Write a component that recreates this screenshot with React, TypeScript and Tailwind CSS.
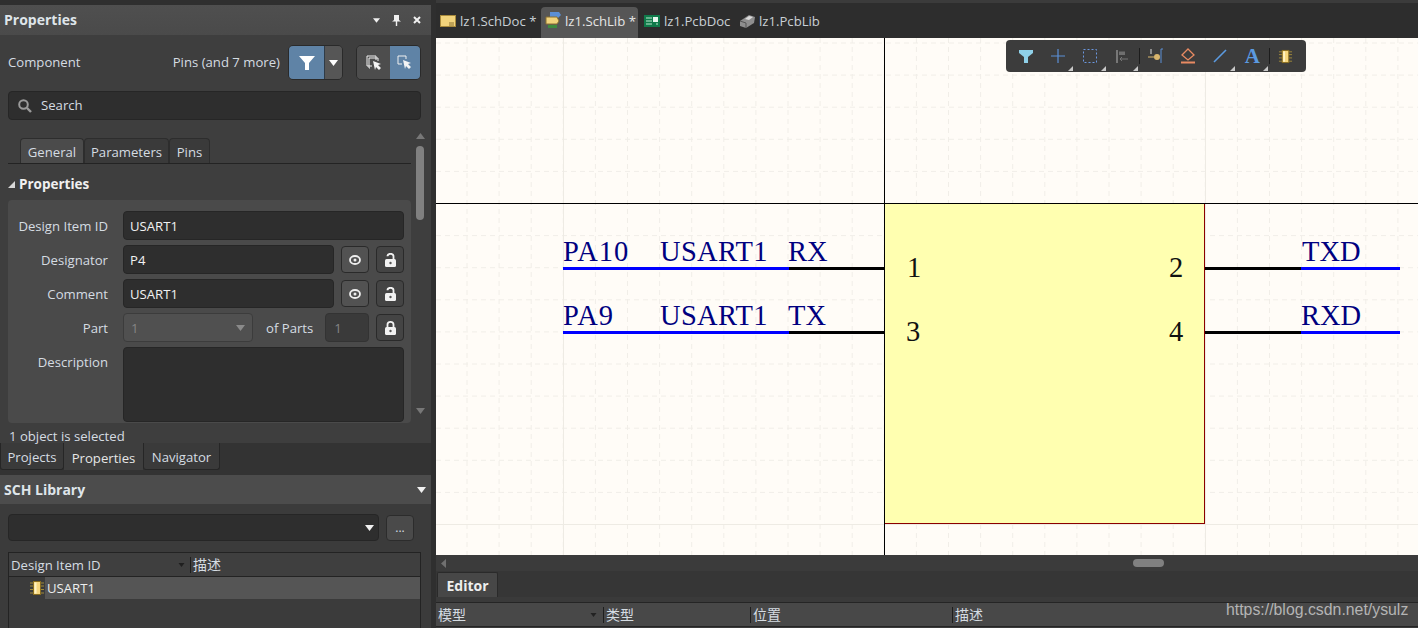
const minorX = Array.from({ length: 31 }, (_, i) => 31 + i * 32.1);
const minorY = Array.from({ length: 17 }, (_, i) => 5 + i * 32.1);

function Caret({ className = "", w = 9, h = 6 }: { className?: string; w?: number; h?: number }) {
  return (
    <svg width={w} height={h} viewBox="0 0 9 6" className={className}>
      <path d="M0 0h9L4.500 6z" fill="currentColor" />
    </svg>
  );
}

function Chip({ size = 16 }: { size?: number }) {
  return (
    <svg width={size} height={size} viewBox="0 0 16 16">
      <path d="M1 3h14M1 6h14M1 9.500h14M1 13h14" stroke="#a08a3c" strokeWidth="1" />
      <rect x="4.500" y="1.500" width="7" height="13" fill="#f7d77e" stroke="#8a6d1e" />
      <rect x="5.500" y="2.500" width="2" height="11" fill="#fff3c4" />
    </svg>
  );
}

function EyeIcon() {
  return (
    <svg width="12" height="10" viewBox="0 0 12 10">
      <ellipse cx="6" cy="5" rx="5" ry="4" fill="none" stroke="#eeeeee" strokeWidth="1.800" />
      <circle cx="6" cy="5" r="1.500" fill="#eeeeee" />
    </svg>
  );
}

function LockIcon({ open }: { open?: boolean }) {
  return (
    <svg width="11" height="14" viewBox="0 0 11 14">
      <path d={open ? "M2.500 3.200a3 2.400 0 0 1 6 0V7" : "M2.500 7V3.500a3 2.600 0 0 1 6 0V7"} fill="none" stroke="#f2f2f2" strokeWidth="1.800" />
      <rect x="0" y="6" width="11" height="8" rx="1.500" fill="#f2f2f2" />
      <circle cx="5.500" cy="10" r="1.200" fill="#555555" />
    </svg>
  );
}

function SmallButton({ children, light }: { children: React.ReactNode; light?: boolean }) {
  return (
    <button className={`flex h-[27px] w-[28px] items-center justify-center rounded-[4px] border border-[#2a2a2a] ${light ? "bg-[#525252]" : "bg-[#444444]"}`}>
      {children}
    </button>
  );
}

function Label({ children }: { children: React.ReactNode }) {
  return <div className="w-[100px] shrink-0 whitespace-nowrap text-right text-[#d5dce2]">{children}</div>;
}

function Field({ value }: { value: string }) {
  return (
    <div className="flex h-[29px] flex-1 items-center rounded-[4px] border border-[#262626] bg-[#2e2e2e] px-[6px] text-[#f2f2f2]">
      {value}
    </div>
  );
}

function FieldRow({ label, value, lockOpen, light }: { label: string; value: string; lockOpen?: boolean; light?: boolean }) {
  return (
    <div className="flex h-[29px] items-center">
      <Label>{label}</Label>
      <div className="ml-[15px] flex flex-1 items-center gap-[7px]">
        <Field value={value} />
        <SmallButton light={light}><EyeIcon /></SmallButton>
        <SmallButton><LockIcon open={lockOpen} /></SmallButton>
      </div>
    </div>
  );
}

function PropertiesPanel() {
  return (
    <div className="relative flex h-[438px] flex-col bg-[#3e3e3e]">
      <div className="flex h-[30px] shrink-0 items-center justify-between bg-gradient-to-b from-[#4f4f4f] to-[#4a4a4a] pl-[4px] pr-[10px]">
        <span className="text-[14px] font-bold text-[#dfe5ea]">Properties</span>
        <div className="flex items-center gap-[12px] text-[#f0f0f0]">
          <Caret w={7} h={5} />
          <svg width="9" height="11" viewBox="0 0 9 11"><path d="M2 0h5v5l2 1.500H5.200V11H3.800V6.500H0L2 5z" fill="currentColor" /></svg>
          <svg width="8" height="8" viewBox="0 0 8 8"><path d="M1 1l6 6M7 1L1 7" stroke="currentColor" strokeWidth="2" /></svg>
        </div>
      </div>

      <div className="mt-[10px] flex h-[35px] items-center pl-[8px] pr-[10px]">
        <span className="pb-[2px] text-[#d5dce2]">Component</span>
        <span className="ml-auto mr-[8px] pb-[2px] text-[#d5dce2]">Pins (and 7 more)</span>
        <div className="flex h-[35px] overflow-hidden rounded-[5px] border border-[#2a2a2a]">
          <div className="flex w-[35px] items-center justify-center bg-[#5f83a6]">
            <svg width="16" height="16" viewBox="0 0 16 16"><path d="M0 1h16L10 8v7H6V8z" fill="#fff" /></svg>
          </div>
          <div className="flex w-[18px] items-center justify-center border-l border-[#2f3b47] bg-[#565656] text-white"><Caret /></div>
        </div>
        <div className="ml-[13px] flex h-[35px] overflow-hidden rounded-[5px] border border-[#2a2a2a]">
          <div className="flex w-[33px] items-center justify-center bg-[#4d4d4d]">
            <svg width="16" height="16" viewBox="0 0 16 16">
              <path d="M6 11H1V1h9v4M4 13H3V3h9v3" fill="none" stroke="#f0f0f0" />
              <path d="M7 6l8 3-3 1 3 3-2 2-3-3-1 3z" fill="#f4f4f4" />
            </svg>
          </div>
          <div className="flex w-[30px] items-center justify-center bg-[#5f83a6]">
            <svg width="16" height="16" viewBox="0 0 16 16">
              <path d="M5 9H1V1h8v3" fill="none" stroke="#f0f0f0" />
              <path d="M6 5l8 3-3 1 3 3-2 2-3-3-1 3z" fill="#f4f4f4" />
            </svg>
          </div>
        </div>
      </div>

      <div className="mx-[8px] mr-[10px] mt-[11px] flex h-[29px] items-center gap-[9px] rounded-[4px] border border-[#262626] bg-[#2e2e2e] pl-[9px]">
        <svg width="14" height="14" viewBox="0 0 14 14">
          <circle cx="5.500" cy="5.500" r="4.300" fill="none" stroke="#9a9a9a" strokeWidth="2" />
          <path d="M9 9l4 4" stroke="#9a9a9a" strokeWidth="2.400" />
        </svg>
        <span className="pb-[2px] text-[#d5dce2]">Search</span>
      </div>

      <div className="relative flex-1 overflow-hidden pr-[20px]">
        <div className="ml-[8px] mt-[18px] flex h-[26px] border-b border-[#232323] pl-[12px]">
          <div className="flex w-[64px] items-center justify-center rounded-t-[4px] border border-b-0 border-[#2d2d2d] bg-[#4b4b4b] pt-[2px] text-[#d5dce2]">General</div>
          <div className="flex w-[85px] items-center justify-center rounded-t-[4px] border border-b-0 border-[#2d2d2d] bg-[#3a3a3a] pt-[2px] text-[#d5dce2]">Parameters</div>
          <div className="flex w-[41px] items-center justify-center rounded-t-[4px] border border-b-0 border-[#2d2d2d] bg-[#3a3a3a] pt-[2px] text-[#d5dce2]">Pins</div>
        </div>
        <div className="ml-[8px] mt-[11px] flex h-[18px] items-center gap-[4px]">
          <svg width="7" height="7" viewBox="0 0 7 7"><path d="M7 0v7H0z" fill="#d8d8d8" /></svg>
          <span className="text-[13.500px] font-bold text-[#f0f0f0]">Properties</span>
        </div>
        <div className="ml-[8px] mt-[7px] flex h-[223px] flex-col gap-[5px] overflow-hidden rounded-[4px] bg-[#4a4a4a] pr-[7px] pt-[11px]">
          <div className="flex h-[29px] items-center">
            <Label>Design Item ID</Label>
            <div className="ml-[15px] flex flex-1"><Field value="USART1" /></div>
          </div>
          <FieldRow label="Designator" value="P4" lockOpen light />
          <FieldRow label="Comment" value="USART1" lockOpen light />
          <div className="flex h-[29px] items-center">
            <Label>Part</Label>
            <div className="ml-[15px] flex h-[29px] w-[130px] shrink-0 items-center justify-between rounded-[4px] border border-[#3c3c3c] bg-[#505050] px-[7px] text-[#858585]">
              1<Caret className="text-[#8a8a8a]" />
            </div>
            <span className="ml-[13px] whitespace-nowrap text-[#d5dce2]">of Parts</span>
            <div className="ml-[12px] flex h-[29px] w-[44px] shrink-0 items-center rounded-[4px] border border-[#333333] bg-[#3a3a3a] px-[8px] text-[#858585]">1</div>
            <div className="ml-[7px]"><SmallButton><LockIcon /></SmallButton></div>
          </div>
          <div className="flex items-start">
            <div className="pt-[6px]"><Label>Description</Label></div>
            <div className="ml-[15px] h-[75px] flex-1 rounded-[4px] border border-[#262626] bg-[#2e2e2e]" />
          </div>
        </div>

        {/* scrollbar */}
        <div className="absolute right-[7px] top-[13px] flex h-[281px] w-[8px] flex-col items-center justify-between text-[#777777]">
          <Caret className="rotate-180" />
          <div className="absolute top-[13px] h-[74px] w-[8px] rounded-[4px] bg-[#808080]" />
          <Caret />
        </div>
      </div>
      <div className="absolute bottom-[-1px] left-[9px] h-[15px] leading-[15px] text-[#d5dce2]">1 object is selected</div>
    </div>
  );
}

function LibraryPanel() {
  return (
    <div className="flex flex-1 flex-col bg-[#3b3b3b]">
      <div className="flex h-[29px] shrink-0 items-center justify-between bg-[#4c4c4c] pl-[4px] pr-[5px]">
        <span className="text-[14px] font-bold text-[#dfe5ea]">SCH Library</span>
        <Caret className="text-[#f0f0f0]" />
      </div>
      <div className="mt-[10px] flex items-center pl-[8px]">
        <div className="flex h-[27px] w-[371px] items-center justify-end rounded-[4px] border border-[#262626] bg-[#2e2e2e] pr-[4px] text-[#f0f0f0]"><Caret /></div>
        <div className="ml-[7px] flex h-[26px] w-[28px] items-center justify-center rounded-[4px] border border-[#2c2c2c] bg-[#4a4a4a] text-[12px] leading-none text-[#d5dce2]">...</div>
      </div>
      <div className="ml-[8px] mt-[11px] flex w-[413px] flex-1 flex-col border-x border-t border-[#232323]">
        <div className="flex h-[24px] items-center border-b border-[#232323] bg-[#3f3f3f] text-[#d5dce2]">
          <span className="ml-[2px] w-[167px]">Design Item ID</span>
          <Caret w={7} h={4} className="text-[#1f1f1f]" />
          <div className="ml-[5px] h-[16px] w-px bg-[#1e1e1e]" />
          <span className="ml-[2px] text-[14px]">描述</span>
        </div>
        <div className="flex h-[22px] items-center">
          <div className="ml-[20px]"><Chip size={16} /></div>
          <div className="flex h-[22px] flex-1 items-center bg-[#555555] pl-[2px] text-[#eeeeee]">USART1</div>
        </div>
      </div>
    </div>
  );
}

function ToolCorner() {
  return <span className="absolute bottom-[1px] right-[1px] h-0 w-0 border-b-[5px] border-l-[5px] border-b-[#c8c8c8] border-l-transparent" />;
}

function Tool({ children, corner }: { children: React.ReactNode; corner?: boolean }) {
  return (
    <div className="relative flex h-[32px] w-[32.200px] items-center justify-center">
      {children}
      {corner && <ToolCorner />}
    </div>
  );
}

function FloatingToolbar() {
  return (
    <div className="absolute left-[570px] top-[2px] flex h-[32px] w-[300px] items-center rounded-[4px] bg-[#3c3c3c] pl-[4px]">
      <Tool>
        <svg width="14" height="13" viewBox="0 0 14 13"><path d="M0 0h14v3L9 7v6H5V7L0 3z" fill="#8fd0e8" /></svg>
      </Tool>
      <Tool corner>
        <svg width="14" height="14" viewBox="0 0 14 14"><path d="M7 0v14M0 7h14" stroke="#5b8fd6" strokeWidth="1.200" /></svg>
      </Tool>
      <Tool corner>
        <svg width="14" height="14" viewBox="0 0 14 14"><rect x="0.500" y="0.500" width="13" height="13" fill="none" stroke="#6b97df" strokeDasharray="2 2" /></svg>
      </Tool>
      <Tool corner>
        <svg width="13" height="13" viewBox="0 0 13 13"><path d="M1 0v13" stroke="#777777" strokeWidth="2" /><path d="M3 1.500h6v3.500H3z" fill="#6f6f6f" /><path d="M12 9H4M6 7L4 9l2 2" fill="none" stroke="#777777" /></svg>
      </Tool>
      <div className="h-[16px] w-px bg-[#1c1c1c]" />
      <Tool>
        <svg width="16" height="16" viewBox="0 0 16 16"><path d="M0 9h6" stroke="#d8b56c" /><circle cx="9" cy="9" r="3" fill="#d8b56c" /><path d="M15 1h-2v14" fill="none" stroke="#5b8fd6" /><path d="M3 1v5" stroke="#dddddd" /></svg>
      </Tool>
      <Tool>
        <svg width="14" height="16" viewBox="0 0 14 16"><path d="M7 1l6 6-6 5-6-5z" fill="none" stroke="#e88a62" strokeWidth="1.300" /><path d="M0 14.500h14" stroke="#e88a62" strokeWidth="2" /></svg>
      </Tool>
      <Tool corner>
        <svg width="14" height="14" viewBox="0 0 14 14"><path d="M1 13L13 1" stroke="#5b9ae0" strokeWidth="1.600" /></svg>
      </Tool>
      <Tool corner>
        <span className="text-[21px] font-bold leading-none text-[#5b9ae0] [font-family:'Liberation_Serif',serif]">A</span>
      </Tool>
      <div className="h-[16px] w-px bg-[#1c1c1c]" />
      <Tool><Chip size={15} /></Tool>
    </div>
  );
}

function PinLabel({ x, y, wide, children }: { x: number; y: number; wide?: string; children: React.ReactNode }) {
  return (
    <span className={`absolute whitespace-pre text-[28.500px] leading-[32px] text-[#000080] ${wide ?? ""}`} style={{ left: x, top: y }}>
      {children}
    </span>
  );
}

function PinNumber({ x, y, children }: { x: number; y: number; children: React.ReactNode }) {
  return (
    <span className="absolute text-[28.500px] leading-[32px] text-[#111111]" style={{ left: x, top: y }}>
      {children}
    </span>
  );
}

function SchematicCanvas() {
  return (
    <div className="relative flex-1 overflow-hidden bg-[#fffcf7] [font-family:'Liberation_Serif',serif]">
      {/* grid, crosshair and pins are the drawing itself */}
      <svg className="absolute inset-0" width="982" height="517">
        {minorX.map((x) => (
          <line key={x} x1={x} x2={x} y1="0" y2="517" stroke="#f1eee8" strokeDasharray="5 4" />
        ))}
        {minorY.map((y) => (
          <line key={y} x1="0" x2="982" y1={y} y2={y} stroke="#f1eee8" strokeDasharray="5 4" />
        ))}
        <path d="M127.500 0v517M769.500 0v517M0 486.500h982" stroke="#eeebe4" />
        <rect x="448.500" y="165.500" width="320" height="320" fill="#ffffb0" stroke="#8b0000" />
        <path d="M0 165.500h982M448.500 0v517" stroke="#000" />
        <path d="M127 230.500h226M127 294.500h226M865 230.500h99M865 294.500h99" stroke="#0000ff" strokeWidth="3" />
        <path d="M353 230.500h95M353 294.500h95M769 230.500h96M769 294.500h96" stroke="#000" strokeWidth="3" />
      </svg>
      <PinLabel x={127} y={198} wide="tracking-[1px]">PA10</PinLabel>
      <PinLabel x={224} y={198} wide="tracking-[0.300px]">USART1</PinLabel>
      <PinLabel x={352} y={198}>RX</PinLabel>
      <PinLabel x={127} y={262} wide="tracking-[1px]">PA9</PinLabel>
      <PinLabel x={224} y={262} wide="tracking-[0.300px]">USART1</PinLabel>
      <PinLabel x={352} y={262}>TX</PinLabel>
      <PinLabel x={866} y={198}>TXD</PinLabel>
      <PinLabel x={865} y={262}>RXD</PinLabel>
      <PinNumber x={471} y={214}>1</PinNumber>
      <PinNumber x={470} y={278}>3</PinNumber>
      <PinNumber x={733} y={214}>2</PinNumber>
      <PinNumber x={733} y={278}>4</PinNumber>
      <div className="[font-family:'Open_Sans',sans-serif]"><FloatingToolbar /></div>
    </div>
  );
}

function DocTab({ icon, label, active, width }: { icon: React.ReactNode; label: string; active?: boolean; width: string }) {
  return (
    <div className={`flex h-[31px] items-center gap-[4px] rounded-t-[4px] pb-[3px] ${width} ${active ? "bg-[#565656] text-[#e6e6e6]" : "text-[#c9d0d6]"}`}>
      {icon}
      <span className="whitespace-nowrap">{label}</span>
    </div>
  );
}

export default function App() {
  return (
    <div className="relative flex h-[628px] w-[1418px] overflow-hidden bg-[#2f2f2f] text-[13.150px] leading-[18px] [font-family:'Open_Sans','Noto_Sans_CJK_SC',sans-serif]">
      <div className="flex w-[431px] shrink-0 flex-col pt-[5px]">
        <PropertiesPanel />
        <div className="flex h-[28px] shrink-0 items-start bg-[#333333]">
          <div className="flex h-[27px] w-[64px] items-center justify-center rounded-b-[3px] border border-t-0 border-[#262626] bg-[#3a3a3a] pt-[2px] text-[#d5dce2]">Projects</div>
          <div className="flex h-[27px] w-[79px] items-center justify-center bg-[#3e3e3e] pt-[2px] text-[#e6e6e6]">Properties</div>
          <div className="flex h-[27px] w-[77px] items-center justify-center rounded-b-[3px] border border-t-0 border-[#262626] bg-[#3a3a3a] pt-[2px] text-[#d5dce2]">Navigator</div>
        </div>
        <div className="h-[4px] shrink-0 bg-[#333333]" />
        <LibraryPanel />
      </div>

      <div className="ml-[5px] flex flex-1 flex-col">
        <div className="flex h-[38px] shrink-0 items-end border-t-[3px] border-[#3b3b3b] bg-[#2d2d2d]">
          <DocTab
            width="w-[105px] pl-[4px]"
            label="lz1.SchDoc *"
            icon={
              <svg width="16" height="12" viewBox="0 0 16 12"><rect x="0.500" y="0.500" width="15" height="11" fill="#f1d37c" stroke="#a88a3c" /><path d="M9 8h5M9 10h5" stroke="#8a7030" /></svg>
            }
          />
          <DocTab
            active
            width="w-[97px] pl-[4px]"
            label="lz1.SchLib *"
            icon={
              <svg width="16" height="18" viewBox="0 0 16 18"><path d="M5 0h9l2 3-3 3H5z" fill="#5b8fd6" /><path d="M1 5h11l2 4-2 3H1z" fill="#f1d37c" stroke="#8a7030" /><path d="M3 13h9v3H3z" fill="#3f8a3f" /></svg>
            }
          />
          <DocTab
            width="w-[96px] pl-[6px]"
            label="lz1.PcbDoc"
            icon={
              <svg width="16" height="12" viewBox="0 0 16 12"><rect width="16" height="12" fill="#0f7a4a" /><path d="M2 3h6M2 6h6M2 9h6M12 9h2" stroke="#bfe8cf" /><rect x="9" y="2" width="5" height="5" fill="#e8f5ee" /></svg>
            }
          />
          <DocTab
            width="w-[90px] pl-[6px]"
            label="lz1.PcbLib"
            icon={
              <svg width="15" height="14" viewBox="0 0 15 14"><path d="M0 7l9-6 6 2-1 6-8 5-6-2z" fill="#8e8e8e" /><path d="M5 5l4-3 4 1-4 3z" fill="#dcdcdc" /><path d="M0 7l6 2v5" fill="none" stroke="#555555" /></svg>
            }
          />
        </div>

        <SchematicCanvas />

        <div className="flex h-[16px] shrink-0 items-center bg-[#3b3b3b] pl-[5px]">
          <svg width="5" height="9" viewBox="0 0 5 9"><path d="M5 0v9L0 4.500z" fill="#707070" /></svg>
          <div className="ml-[687px] h-[8px] w-[31px] rounded-[4px] bg-[#808080]" />
        </div>
        <div className="h-[26px] shrink-0 bg-[#363636] pl-px pt-[1px]">
          <div className="flex h-[25px] w-[61px] items-center justify-center rounded-t-[2px] border border-b-0 border-[#2a2a2a] bg-[#474747] pt-[2px] text-[14px] font-bold text-[#eeeeee]">Editor</div>
        </div>
        <div className="h-[5px] shrink-0 bg-[#3a3a3a]" />
        <div className="flex h-[25px] shrink-0 items-center border-y border-[#252525] bg-[#484848] text-[14px] text-[#d5dce2]">
          <div className="flex w-[167px] items-center justify-between pl-[2px] pr-[6px]">
            <span>模型</span>
            <Caret w={7} h={4} className="text-[#222222]" />
          </div>
          <div className="h-[16px] w-px bg-[#1e1e1e]" />
          <span className="ml-[2px] w-[144px]">类型</span>
          <div className="h-[16px] w-px bg-[#1e1e1e]" />
          <span className="ml-[2px] w-[199px]">位置</span>
          <div className="h-[16px] w-px bg-[#1e1e1e]" />
          <span className="ml-[2px]">描述</span>
        </div>
        <div className="h-[1px] bg-[#3a3a3a]" />
      </div>

      <span className="absolute left-[1226px] top-[600px] text-[15.850px] leading-[19px] text-[#b4b4b4] [font-family:'Liberation_Sans',sans-serif]">
        https://blog.csdn.net/ysulz
      </span>
    </div>
  );
}
